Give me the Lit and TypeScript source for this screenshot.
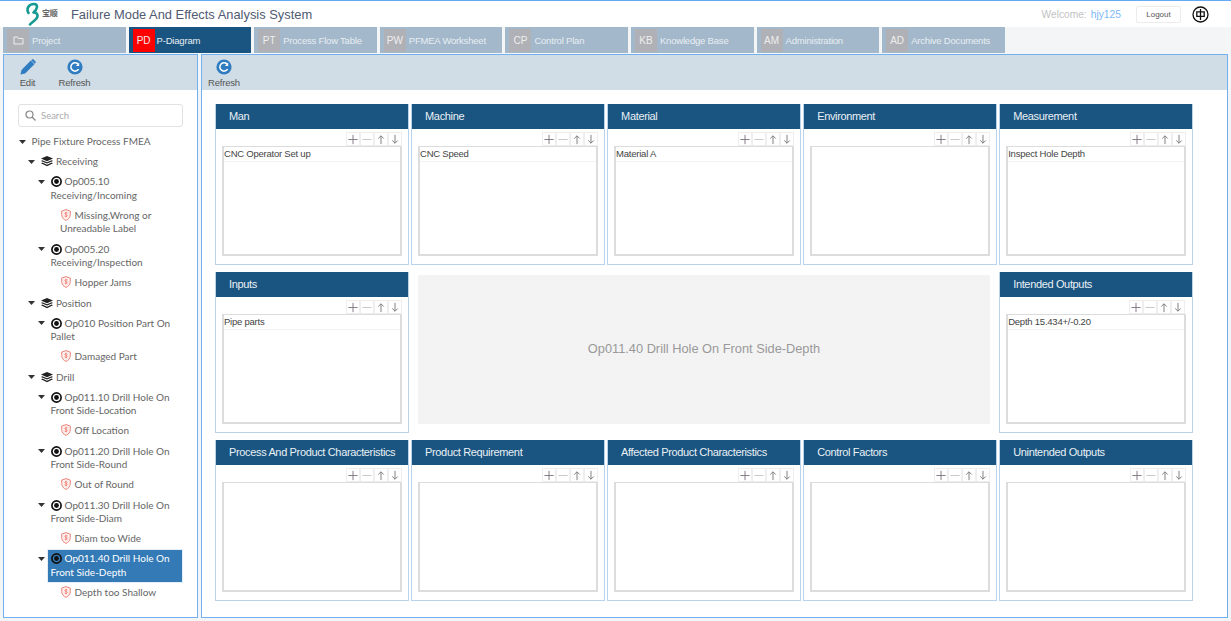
import { LitElement, html, css, svg } from "lit";
import { customElement } from "lit/decorators.js";

type Node = { t: string; k: "root" | "layer" | "op" | "leaf"; sel?: boolean; kids?: Node[] };

const tree: Node = {
  t: "Pipe Fixture Process FMEA", k: "root", kids: [
    { t: "Receiving", k: "layer", kids: [
      { t: "Op005.10 Receiving/Incoming", k: "op", kids: [{ t: "Missing,Wrong or Unreadable Label", k: "leaf" }] },
      { t: "Op005.20 Receiving/Inspection", k: "op", kids: [{ t: "Hopper Jams", k: "leaf" }] },
    ]},
    { t: "Position", k: "layer", kids: [
      { t: "Op010 Position Part On Pallet", k: "op", kids: [{ t: "Damaged Part", k: "leaf" }] },
    ]},
    { t: "Drill", k: "layer", kids: [
      { t: "Op011.10 Drill Hole On Front Side-Location", k: "op", kids: [{ t: "Off Location", k: "leaf" }] },
      { t: "Op011.20 Drill Hole On Front Side-Round", k: "op", kids: [{ t: "Out of Round", k: "leaf" }] },
      { t: "Op011.30 Drill Hole On Front Side-Diam", k: "op", kids: [{ t: "Diam too Wide", k: "leaf" }] },
      { t: "Op011.40 Drill Hole On Front Side-Depth", k: "op", sel: true, kids: [{ t: "Depth too Shallow", k: "leaf" }] },
    ]},
  ],
};

const tabs = [
  ["", "Project"], ["PD", "P-Diagram"], ["PT", "Process Flow Table"], ["PW", "PFMEA Worksheet"],
  ["CP", "Control Plan"], ["KB", "Knowledge Base"], ["AM", "Administration"], ["AD", "Archive Documents"],
];

const refreshIcon = html`<svg width="16" height="16" viewBox="0 0 16 16"><circle cx="8" cy="8" r="7.6" fill="#2f7cc1"/><path d="M11.4 5.4A4.2 4.2 0 1 0 11.6 10.2" fill="none" stroke="#fff" stroke-width="1.5"/><path d="M12.2 3.6V7H8.9z" fill="#fff"/></svg>`;
const editIcon = html`<svg width="16" height="16" viewBox="0 0 16 16"><path d="M0.5 15.5l1-4.6L10.8 1.6l3.6 3.6-9.3 9.3z" fill="#2f7cc1"/><path d="M11.8.7c.6-.6 1.4-.6 2 0l1.500 1.500c.6.6.6 1.400 0 2l-.6.6-3.500-3.500z" fill="#2f7cc1"/></svg>`;
const layerIcon = html`<svg class="ic" width="12" height="11" viewBox="0 0 12 11"><path d="M6 0l6 2.600L6 5.200 0 2.600z" fill="#222"/><path d="M1.300 4.200L0 4.900l6 2.600 6-2.600-1.300-.7L6 6.200z" fill="#222"/><path d="M1.300 6.600L0 7.300l6 3 6-3-1.300-.7L6 8.700z" fill="#222"/></svg>`;
const opIcon = html`<svg class="ic op" width="11" height="11" viewBox="0 0 11 11"><circle cx="5.500" cy="5.500" r="4.600" fill="none" stroke="#111" stroke-width="1.700"/><circle cx="5.500" cy="5.500" r="2.400" fill="#111"/></svg>`;
const shieldIcon = html`<svg class="ic leaf" width="10" height="12" viewBox="0 0 10 12"><path d="M5 .6l4.300 1.500v3.500c0 2.700-1.800 4.700-4.300 5.800C2.500 10.300.7 8.300.7 5.600V2.100z" fill="#fdeeee" stroke="#ef8478" stroke-width="1"/><path d="M6.500 4.100C6 3.500 4 3.300 3.900 4.500c0 1.300 2.500.8 2.400 2.200-.1 1.200-2 1-2.700.3M5 2.900v5.300" fill="none" stroke="#ef6f60" stroke-width=".7"/></svg>`;
const caret = html`<svg class="caret" width="7" height="4" viewBox="0 0 7 4"><path d="M0 0h7L3.500 4z" fill="#333"/></svg>`;

const plus = svg`<path d="M6.500 1.500v10M1.500 6.500h10" stroke="#7d7480" stroke-width="1" fill="none"/>`;
const minus = svg`<path d="M1.500 6.500h10" stroke="#c4c4c4" stroke-width="1" fill="none"/>`;
const up = svg`<path d="M6.500 11.500V2.500M3.500 5.500l3-3 3 3" stroke="#777" stroke-width="1" fill="none"/>`;
const down = svg`<path d="M6.500 1.500v9M3.500 7.500l3 3 3-3" stroke="#777" stroke-width="1" fill="none"/>`;

@customElement("fm-card")
export class FmCard extends LitElement {
  static properties = { title: {}, items: { type: Array }, shift: { type: Boolean } };
  title = "";
  items: string[] = [];
  shift = false;
  static styles = css`
    :host { display: flex; flex-direction: column; border: 1px solid #b9d3ec; border-top: 0; box-sizing: border-box; background: #fff; min-width: 0; }
    .head { height: 25px; background: #1a5480; color: #e9f1f6; font: 11px/25px "Liberation Sans", sans-serif; letter-spacing: -.35px; padding-left: 13px; flex: none; white-space: nowrap; }
    .tools { display: flex; justify-content: flex-end; height: 14px; margin: 3px 6px 0 0; flex: none; }
    .tools.shift { margin-right: 7px; }
    .tools span { width: 14px; height: 14px; box-sizing: border-box; border: 1px solid #eee; display: flex; align-items: center; justify-content: center; }
    .list { flex: 1; margin: 0 6px 8px; border: 2px solid #dcdcdc; border-top-width: 1px; background: #fff; }
    .item { height: 14px; font: 9.500px/13px "Liberation Sans", sans-serif; letter-spacing: -.23px; color: #444; border-bottom: 1px solid #f2f2f2; }
  `;
  render() {
    return html`
      <div class="head">${this.title}</div>
      <div class="tools ${this.shift ? "shift" : ""}">
        ${[plus, minus, up, down].map((p) => html`<span><svg width="13" height="13" viewBox="0 0 13 13">${p}</svg></span>`)}
      </div>
      <div class="list">${this.items.map((i) => html`<div class="item">${i}</div>`)}</div>
    `;
  }
}

@customElement("app-root")
export class AppRoot extends LitElement {
  static styles = css`
    :host { display: flex; flex-direction: column; height: 621px; width: 1231px; overflow: hidden; background: #f4f5f7; font-family: "Liberation Sans", sans-serif; }
    header { height: 26px; background: #fff; border-top: 1px solid #62aaf5; display: flex; align-items: center; flex: none; }
    .logo { display: flex; align-items: center; margin-left: 25px; width: 46px; flex: none; }
    .logo b { font: 700 8px/1 "Noto Sans CJK SC", sans-serif; color: #666; margin-left: 2px; letter-spacing: -.3px; margin-top: -3px; }
    h1 { margin: 0; font: 400 12.900px "Liberation Sans", sans-serif; color: #505a72; flex: 1; }
    .welcome { font-size: 10.200px; color: #c2c2c2; margin-right: 4px; }
    .user { font-size: 10.300px; color: #7cb8f5; margin-right: 15px; }
    .logout { width: 45px; height: 17px; box-sizing: border-box; border: 1px solid #ececec; border-radius: 2px; background: #fff; color: #555; font: 8px/15px "Liberation Sans", sans-serif; text-align: center; margin-right: 11px; }
    .lang { width: 17px; height: 17px; margin-right: 22px; }
    .tabs { display: flex; gap: 3px; height: 26px; padding-left: 3px; flex: none; }
    .tab { width: 122.600px; background: #a3b8ca; color: #e8eef3; display: flex; align-items: center; font-size: 9.500px; letter-spacing: -.2px; }
    .tab.on { background: #1a5480; }
    .sq { width: 22px; height: 23px; margin: 1px 3px 0 4px; background: #b0b1b6; color: #eee; display: flex; align-items: center; justify-content: center; font-size: 10px; letter-spacing: 0; }
    .tab.on .sq { background: #f00; margin-right: 2px; }
    main { flex: 1; display: flex; gap: 3px; padding: 1px 3px 3px; min-height: 0; }
    .panel { background: #fff; border: 1px solid #72b0f0; display: flex; flex-direction: column; box-sizing: border-box; }
    .left { width: 195px; flex: none; }
    .right { flex: 1; min-width: 0; }
    .bar { height: 35px; background: #d0dce6; display: flex; flex: none; }
    .btn { display: flex; flex-direction: column; align-items: center; gap: 2px; padding-top: 4px; font-size: 9.500px; letter-spacing: -.2px; line-height: 11px; color: #555; width: 47px; }
    .right .btn { width: 44px; }
    .search { margin: 14px 14px 0 14px; height: 23px; box-sizing: border-box; border: 1px solid #e2e2e2; border-radius: 3px; display: flex; align-items: center; gap: 5px; padding-left: 6px; flex: none; color: #aaa; font: 9.500px Lato, sans-serif; }
    .tree { margin: 4.500px 14px 0 0; font: 10px/13.500px Lato, sans-serif; color: #666; }
    .node { position: relative; }
    .row { display: block; padding: 3.400px 2px 3.300px 4px; }
    .row.sel { background: #337ab7; color: #fff; outline: 1px solid #e3eef8; outline-offset: -1px; }
    .caret { position: absolute; left: -9px; top: 8px; }
    .ic { vertical-align: -2px; margin-right: 3px; }
    .ic.leaf { margin-right: 4px; margin-left: .5px; }
    .grid { display: grid; grid-template-columns: repeat(5, minmax(0, 1fr)); grid-auto-rows: 161px; column-gap: 2.250px; row-gap: 7px; margin: 14px 34px 0 13px; }
    .mid { grid-column: 2 / 5; margin: 3px 7px 9px; background: #f3f3f3; color: #999; display: flex; align-items: center; justify-content: center; font-size: 12.800px; padding-bottom: 3px; box-sizing: border-box; }
  `;

  node(n: Node, base: number): unknown {
    const ic = n.k === "layer" ? layerIcon : n.k === "op" ? opIcon : n.k === "leaf" ? shieldIcon : "";
    return html`<div class="node" style="margin-left:${base}px">
      ${n.kids ? caret : ""}
      <div class="row ${n.sel ? "sel" : ""}">${ic}${n.t}</div>
      ${(n.kids ?? []).map((c) => this.node(c, 9.5))}
    </div>`;
  }

  render() {
    return html`
      <header>
        <div class="logo">
          <svg width="15" height="24" viewBox="0 0 15 24"><path d="M3.500 11C1 7 3.500 2 9 2c4.500 0 3.500 5.500-.5 8.500 4.500 0 5 4 2.500 6.500-2 2.500-4.500 3.500-6 5.500" fill="none" stroke="#179a91" stroke-width="2.600" stroke-linecap="round" stroke-linejoin="round"/></svg>
          <b>宝顺</b>
        </div>
        <h1>Failure Mode And Effects Analysis System</h1>
        <span class="welcome">Welcome:</span><span class="user">hjy125</span>
        <div class="logout">Logout</div>
        <svg class="lang" viewBox="0 0 17 17"><circle cx="8.500" cy="8.500" r="7.500" fill="#fff" stroke="#111" stroke-width="1.300"/><path d="M4.800 5.800h7.400v4.600H4.800zM8.500 3v11" fill="none" stroke="#111" stroke-width="1.300"/></svg>
      </header>
      <nav class="tabs">
        ${tabs.map(([c, t], i) => html`<div class="tab ${i === 1 ? "on" : ""}">
          <span class="sq">${i === 0 ? html`<svg width="11" height="9" viewBox="0 0 11 9"><path d="M1 1h3.500l1 1.500H10V8H1z" fill="none" stroke="#eee" stroke-width="1"/></svg>` : c}</span>${t}</div>`)}
      </nav>
      <main>
        <section class="panel left">
          <div class="bar">
            <div class="btn">${editIcon}<span>Edit</span></div>
            <div class="btn">${refreshIcon}<span>Refresh</span></div>
          </div>
          <div class="search">
            <svg width="11" height="11" viewBox="0 0 11 11"><circle cx="4.500" cy="4.500" r="3.500" fill="none" stroke="#888" stroke-width="1.200"/><path d="M7 7l3.500 3.500" stroke="#888" stroke-width="1.300"/></svg>
            Search
          </div>
          <div class="tree">${this.node(tree, 23.5)}</div>
        </section>
        <section class="panel right">
          <div class="bar"><div class="btn">${refreshIcon}<span>Refresh</span></div></div>
          <div class="grid">
            <fm-card title="Man" .items=${["CNC Operator Set up"]}></fm-card>
            <fm-card title="Machine" .items=${["CNC Speed"]}></fm-card>
            <fm-card title="Material" .items=${["Material A"]}></fm-card>
            <fm-card title="Environment"></fm-card>
            <fm-card title="Measurement" .items=${["Inspect Hole Depth"]}></fm-card>
            <fm-card title="Inputs" .items=${["Pipe parts"]}></fm-card>
            <div class="mid">Op011.40 Drill Hole On Front Side-Depth</div>
            <fm-card title="Intended Outputs" shift .items=${["Depth 15.434+/-0.20"]}></fm-card>
            <fm-card title="Process And Product Characteristics"></fm-card>
            <fm-card title="Product Requirement"></fm-card>
            <fm-card title="Affected Product Characteristics"></fm-card>
            <fm-card title="Control Factors"></fm-card>
            <fm-card title="Unintended Outputs"></fm-card>
          </div>
        </section>
      </main>
    `;
  }
}
